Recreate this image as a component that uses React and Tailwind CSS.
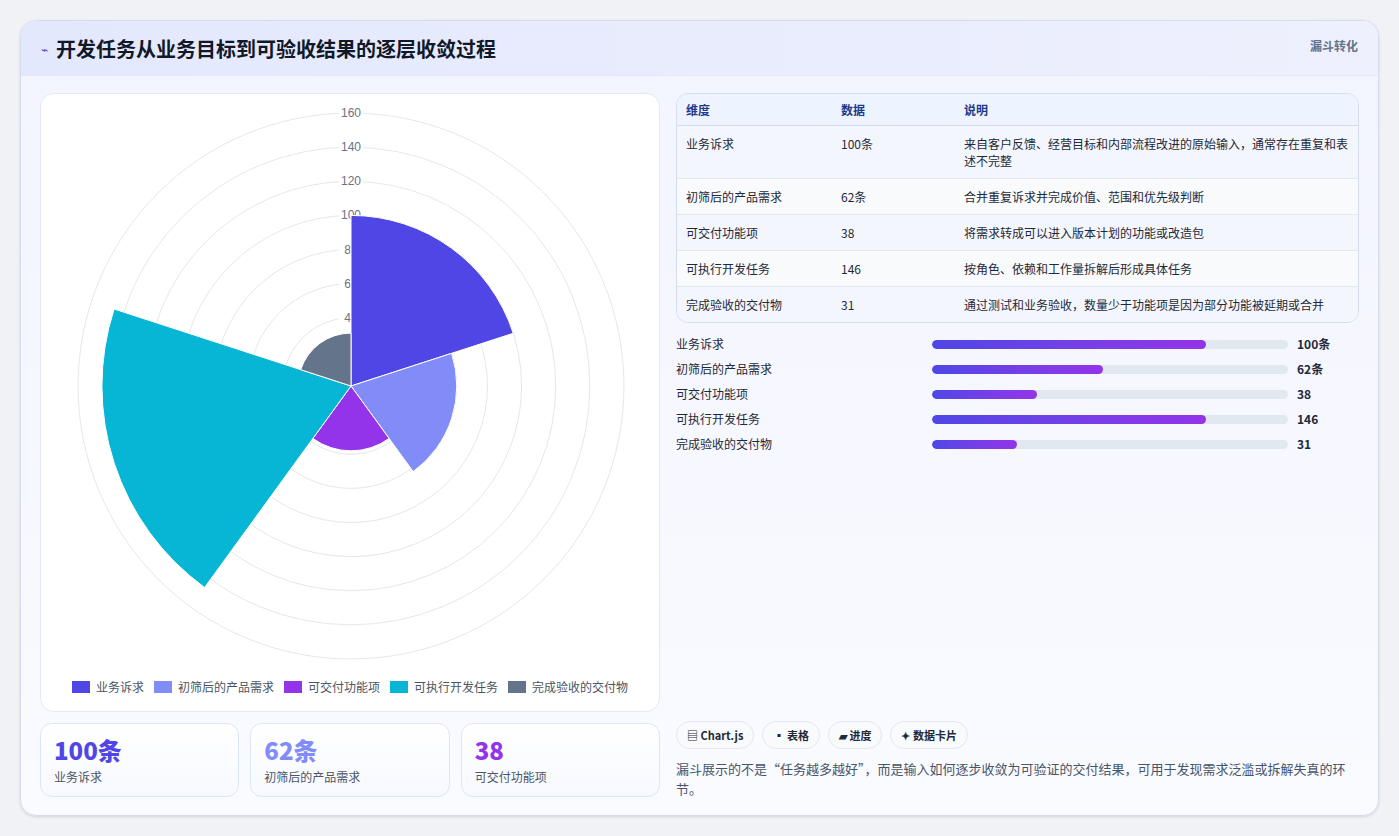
import React from "react";

const data = [
  { l: "业务诉求", v: 100, d: "100条", c: "#4f46e5", p: 77, desc: "来自客户反馈、经营目标和内部流程改进的原始输入，通常存在重复和表述不完整" },
  { l: "初筛后的产品需求", v: 62, d: "62条", c: "#818cf8", p: 48, desc: "合并重复诉求并完成价值、范围和优先级判断" },
  { l: "可交付功能项", v: 38, d: "38", c: "#9333ea", p: 29.5, desc: "将需求转成可以进入版本计划的功能或改造包" },
  { l: "可执行开发任务", v: 146, d: "146", c: "#06b6d4", p: 77, desc: "按角色、依赖和工作量拆解后形成具体任务" },
  { l: "完成验收的交付物", v: 31, d: "31", c: "#64748b", p: 24, desc: "通过测试和业务验收，数量少于功能项是因为部分功能被延期或合并" },
];

const F = { fontFamily: '"Noto Sans CJK SC","Noto Sans",sans-serif' };

function Polar() {
  const cx = 310, cy = 292, k = 1.706;
  const seg = (i, v) => {
    const r = v * k;
    const a0 = ((-90 + i * 72) * Math.PI) / 180, a1 = ((-90 + (i + 1) * 72) * Math.PI) / 180;
    return `M${cx},${cy} L${cx + r * Math.cos(a0)},${cy + r * Math.sin(a0)} A${r},${r} 0 0 1 ${cx + r * Math.cos(a1)},${cy + r * Math.sin(a1)} Z`;
  };
  return (
    <svg width="619" height="570" className="block">
      {[20, 40, 60, 80, 100, 120, 140, 160].map((t) => (
        <circle key={t} cx={cx} cy={cy} r={t * k} fill="none" stroke="#e5e7eb" strokeWidth="1" />
      ))}
      {[40, 60, 80, 100, 120, 140, 160].map((t) => (
        <g key={t}>
          <rect x={cx - 12} y={cy - t * k - 7} width="24" height="13" fill="white" />
          <text x={cx} y={cy - t * k + 4} textAnchor="middle" fontSize="12" fill="#6b7280" fontFamily="Liberation Sans, sans-serif">{t}</text>
        </g>
      ))}
      {data.map((d, i) => (
        <path key={i} d={seg(i, d.v)} fill={d.c} stroke="white" strokeWidth="1" />
      ))}
    </svg>
  );
}

export default function App() {
  return (
    <div className="w-[1399px] h-[836px] bg-[#f1f2f6] pt-[20px] px-[20px]" style={F}>
      <div className="w-[1359px] h-[796px] rounded-[16px] border border-[#d6dcf0] bg-gradient-to-b from-[#f2f4ff] to-[#fafbff] overflow-hidden shadow-sm">
        <div className="h-[55px] bg-gradient-to-r from-[#e3e8fd] to-[#eef0fd] flex items-start justify-between px-[20px] pt-[14px] border-b border-[#e4e8f6]">
          <div className="flex items-center gap-[8px]">
            <span className="text-[#4f46e5] text-[12px]">⌁</span>
            <span className="text-[20px] font-bold text-[#111827] leading-[28px]">开发任务从业务目标到可验收结果的逐层收敛过程</span>
          </div>
          <span className="text-[12px] text-[#64748b] font-semibold mt-[2px]">漏斗转化</span>
        </div>
        <div className="flex gap-[16px] px-[19px] pt-[17px]">
          <div className="w-[620px] flex flex-col gap-[11px]">
            <div className="h-[619px] bg-white rounded-[14px] border border-[#e5e9f2] flex flex-col">
              <Polar />
              <div className="flex justify-center gap-[10px] mt-[14px] text-[12px] text-[#4b5563]">
                {data.map((d) => (
                  <div key={d.l} className="flex items-center gap-[6px]">
                    <span className="w-[18px] h-[12px]" style={{ background: d.c }} />
                    <span>{d.l}</span>
                  </div>
                ))}
              </div>
            </div>
            <div className="grid grid-cols-3 gap-[11px]">
              {data.slice(0, 3).map((d) => (
                <div key={d.l} className="h-[74px] rounded-[12px] border border-[#dbe6f7] bg-gradient-to-b from-white to-[#f7f9ff] px-[13px] pt-[10px]">
                  <div className="text-[24px] font-extrabold leading-[32px]" style={{ color: d.c }}>{d.d}</div>
                  <div className="text-[12px] text-[#4b5563] mt-[2px]">{d.l}</div>
                </div>
              ))}
            </div>
          </div>
          <div className="w-[685px] flex flex-col">
            <div className="rounded-[12px] border border-[#d5dceb] overflow-hidden text-[12px] text-[#1f2937]">
              <div className="flex h-[32px] items-center bg-[#eef4ff] text-[#1e3a8a] font-semibold border-b border-[#d5dceb]">
                <div className="w-[164px] pl-[9px]">维度</div><div className="w-[123px]">数据</div><div className="flex-1">说明</div>
              </div>
              {data.map((d, i) => (
                <div key={d.l} className={`flex py-[9px] ${i % 2 === 0 ? "bg-[#f4f6fe]" : "bg-[#f8fafc]"} ${i < 4 ? "border-b border-[#e2e8f0]" : ""}`}>
                  <div className="w-[164px] pl-[9px] leading-[17px]">{d.l}</div>
                  <div className="w-[123px] leading-[17px]">{d.d}</div>
                  <div className="flex-1 pr-[10px] leading-[17px]">{d.desc}</div>
                </div>
              ))}
            </div>
            <div className="mt-[12px] flex flex-col gap-[7px] text-[12px] text-[#1f2937]">
              {data.map((d) => (
                <div key={d.l} className="flex items-center h-[18px]">
                  <div className="w-[256px]">{d.l}</div>
                  <div className="w-[356px] h-[9px] rounded-full bg-[#e2e8f0] overflow-hidden">
                    <div className="h-full rounded-full bg-gradient-to-r from-[#4f46e5] to-[#9333ea]" style={{ width: d.p + "%" }} />
                  </div>
                  <div className="ml-[9px] font-bold">{d.d}</div>
                </div>
              ))}
            </div>
            <div className="mt-[268px] flex gap-[8px] text-[11px] text-[#1f2937]">
              {["▤ Chart.js", "▪ 表格", "▰ 进度", "✦ 数据卡片"].map((t) => (
                <span key={t} className="h-[28px] px-[10px] rounded-full border border-[#e2e8f0] bg-[#f8fafc] flex items-center font-semibold">{t}</span>
              ))}
            </div>
            <p className="mt-[10px] text-[13px] leading-[20px] text-[#475569] pr-[10px]">漏斗展示的不是“任务越多越好”，而是输入如何逐步收敛为可验证的交付结果，可用于发现需求泛滥或拆解失真的环节。</p>
          </div>
        </div>
      </div>
    </div>
  );
}
